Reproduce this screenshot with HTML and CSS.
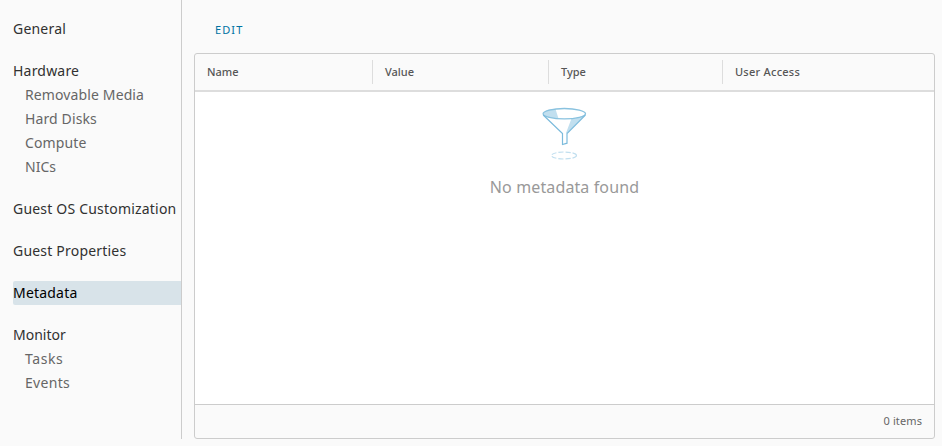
FILE: index.html
```html
<!DOCTYPE html>
<html lang="en">
<head>
<meta charset="utf-8">
<title>Metadata</title>
<link rel="stylesheet" href="styles.css">
</head>
<body>
<div class="layout">
  <nav class="sidebar">
    <section class="group"><a class="link">General</a></section>
    <section class="group">
      <a class="link">Hardware</a>
      <a class="link child">Removable Media</a>
      <a class="link child">Hard Disks</a>
      <a class="link child">Compute</a>
      <a class="link child nics">NICs</a>
    </section>
    <section class="group"><a class="link">Guest OS Customization</a></section>
    <section class="group"><a class="link">Guest Properties</a></section>
    <section class="group"><a class="link active">Metadata</a></section>
    <section class="group">
      <a class="link monitor">Monitor</a>
      <a class="link child tasks">Tasks</a>
      <a class="link child events">Events</a>
    </section>
  </nav>
  <main class="content">
    <div class="toolbar"><button class="edit">EDIT</button></div>
    <div class="datagrid">
      <div class="header">
        <div class="column">Name</div>
        <div class="column">Value</div>
        <div class="column">Type</div>
        <div class="column access">User Access</div>
      </div>
      <div class="placeholder">
        <svg class="funnel" width="60" height="60" viewBox="0 0 60 60" fill="none">
          <path d="M8.500 19Q9 15 15.500 14.200L20.500 14L23.500 23.500Q11 23 8.500 19Z" fill="#c1dfef"/>
          <path d="M49 20.500L32 38H31L36.500 23.500Q45 23 49 20.500Z" fill="#c1dfef"/>
          <ellipse cx="29.300" cy="18.700" rx="21.200" ry="5.200" stroke="#89c2df" stroke-width="1.300"/>
          <path d="M8.200 20L27.500 38.500V49.500L32 48.200V38.500L50.400 20" stroke="#7cbbdc" stroke-width="1.200"/>
          <ellipse cx="29" cy="60.500" rx="12.500" ry="3.500" stroke="#c1dfef" stroke-width="1.200" stroke-dasharray="5 2"/>
        </svg>
        <p class="message">No metadata found</p>
      </div>
      <div class="footer">0 items</div>
    </div>
  </main>
</div>
</body>
</html>
```
FILE: styles.css
```css
* { box-sizing: border-box; }
body {
  margin: 0;
  background: #fafafa;
  color: #565656;
  font-family: "Noto Sans", sans-serif;
}
.layout { display: flex; height: 439px; }
.sidebar {
  width: 182px;
  flex: none;
  padding: 17px 0 0 13px;
  border-right: 1px solid #ccc;
}
.group { margin-bottom: 18px; }
.link {
  display: block;
  height: 24px;
  line-height: 24px;
  font-size: 14px;
  color: #313131;
  letter-spacing: 0.2px;
  white-space: nowrap;
}
.monitor { letter-spacing: 0; }
.child {
  padding-left: 12px;
  color: #666;
  letter-spacing: 0.12px;
}
.nics { letter-spacing: 0; }
.tasks { letter-spacing: 0.6px; }
.events { letter-spacing: 0.3px; }
.active { background: #d8e3e9; color: #000; border-radius: 2px 0 0 2px; }
.content {
  flex: 1;
  display: flex;
  flex-direction: column;
  padding: 0 7px 0 12px;
}
.toolbar { height: 53px; padding: 18px 0 0 21px; }
.edit {
  display: block;
  padding: 0;
  border: 0;
  background: none;
  color: #0072a3;
  font: 11px/24px "Noto Sans", sans-serif;
  letter-spacing: 1.1px;
}
.datagrid {
  flex: 1;
  display: flex;
  flex-direction: column;
  border: 1px solid #ccc;
  border-radius: 3px;
  overflow: hidden;
}
.header {
  display: grid;
  grid-template-columns: 178px 176px 174px 1fr;
  align-items: center;
  height: 38px;
  border-bottom: 2px solid #ddd;
  font-size: 11px;
  font-weight: 550;
}
.column {
  height: 24px;
  line-height: 24px;
  padding-left: 12px;
  border-right: 1px solid #ddd;
}
.column:last-child { border-right: 0; }
.access { letter-spacing: 0.25px; }
.placeholder {
  flex: 1;
  display: flex;
  flex-direction: column;
  align-items: center;
  background: #fff;
}
.funnel { margin-top: 3px; overflow: visible; }
.message {
  margin: 20px 0 0;
  color: #999;
  font-size: 16px;
  line-height: 24px;
  letter-spacing: 0.12px;
}
.footer {
  height: 34px;
  padding-right: 12px;
  border-top: 1px solid #ccc;
  text-align: right;
  color: #666;
  font-size: 11px;
  line-height: 32px;
  letter-spacing: 0.1px;
}
```
